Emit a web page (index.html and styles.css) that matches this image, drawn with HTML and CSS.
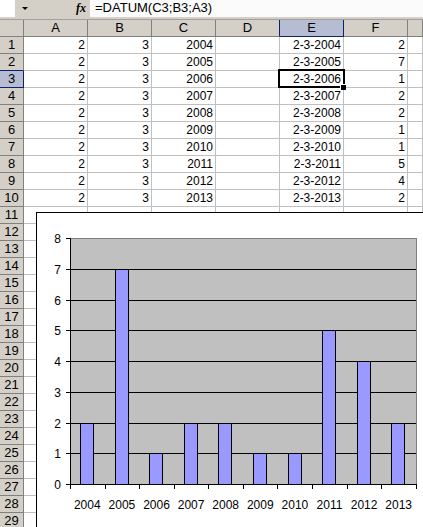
FILE: index.html
```html
<!DOCTYPE html>
<html>
<head>
<meta charset="utf-8">
<link rel="stylesheet" href="styles.css">
</head>
<body>
<div class="formula-bar">
  <div class="name-box"></div>
  <div class="name-drop"><span class="arrow"></span></div>
  <div class="fx-cell"><span class="fx">fx</span></div>
  <div class="formula">=DATUM(C3;B3;A3)</div>
</div>

<div class="sheet">
  <div class="corner"></div><div class="ch">A</div><div class="ch">B</div><div class="ch">C</div><div class="ch pre-sel">D</div><div class="ch sel">E</div><div class="ch">F</div><div class="ch"></div>

  <div class="rh">1</div><div class="c">2</div><div class="c">3</div><div class="c">2004</div><div class="c"></div><div class="c">2-3-2004</div><div class="c">2</div><div class="c"></div>
  <div class="rh pre-sel-row">2</div><div class="c">2</div><div class="c">3</div><div class="c">2005</div><div class="c"></div><div class="c">2-3-2005</div><div class="c">7</div><div class="c"></div>
  <div class="rh sel">3</div><div class="c">2</div><div class="c">3</div><div class="c">2006</div><div class="c"></div><div class="c active">2-3-2006</div><div class="c">1</div><div class="c"></div>
  <div class="rh">4</div><div class="c">2</div><div class="c">3</div><div class="c">2007</div><div class="c"></div><div class="c">2-3-2007</div><div class="c">2</div><div class="c"></div>
  <div class="rh">5</div><div class="c">2</div><div class="c">3</div><div class="c">2008</div><div class="c"></div><div class="c">2-3-2008</div><div class="c">2</div><div class="c"></div>
  <div class="rh">6</div><div class="c">2</div><div class="c">3</div><div class="c">2009</div><div class="c"></div><div class="c">2-3-2009</div><div class="c">1</div><div class="c"></div>
  <div class="rh">7</div><div class="c">2</div><div class="c">3</div><div class="c">2010</div><div class="c"></div><div class="c">2-3-2010</div><div class="c">1</div><div class="c"></div>
  <div class="rh">8</div><div class="c">2</div><div class="c">3</div><div class="c">2011</div><div class="c"></div><div class="c">2-3-2011</div><div class="c">5</div><div class="c"></div>
  <div class="rh">9</div><div class="c">2</div><div class="c">3</div><div class="c">2012</div><div class="c"></div><div class="c">2-3-2012</div><div class="c">4</div><div class="c"></div>
  <div class="rh">10</div><div class="c">2</div><div class="c">3</div><div class="c">2013</div><div class="c"></div><div class="c">2-3-2013</div><div class="c">2</div><div class="c"></div>

  <div class="rh">11</div><div class="c"></div><div class="c"></div><div class="c"></div><div class="c"></div><div class="c"></div><div class="c"></div><div class="c"></div>
  <div class="rh">12</div><div class="c"></div><div class="c"></div><div class="c"></div><div class="c"></div><div class="c"></div><div class="c"></div><div class="c"></div>
  <div class="rh">13</div><div class="c"></div><div class="c"></div><div class="c"></div><div class="c"></div><div class="c"></div><div class="c"></div><div class="c"></div>
  <div class="rh">14</div><div class="c"></div><div class="c"></div><div class="c"></div><div class="c"></div><div class="c"></div><div class="c"></div><div class="c"></div>
  <div class="rh">15</div><div class="c"></div><div class="c"></div><div class="c"></div><div class="c"></div><div class="c"></div><div class="c"></div><div class="c"></div>
  <div class="rh">16</div><div class="c"></div><div class="c"></div><div class="c"></div><div class="c"></div><div class="c"></div><div class="c"></div><div class="c"></div>
  <div class="rh">17</div><div class="c"></div><div class="c"></div><div class="c"></div><div class="c"></div><div class="c"></div><div class="c"></div><div class="c"></div>
  <div class="rh">18</div><div class="c"></div><div class="c"></div><div class="c"></div><div class="c"></div><div class="c"></div><div class="c"></div><div class="c"></div>
  <div class="rh">19</div><div class="c"></div><div class="c"></div><div class="c"></div><div class="c"></div><div class="c"></div><div class="c"></div><div class="c"></div>
  <div class="rh">20</div><div class="c"></div><div class="c"></div><div class="c"></div><div class="c"></div><div class="c"></div><div class="c"></div><div class="c"></div>
  <div class="rh">21</div><div class="c"></div><div class="c"></div><div class="c"></div><div class="c"></div><div class="c"></div><div class="c"></div><div class="c"></div>
  <div class="rh">22</div><div class="c"></div><div class="c"></div><div class="c"></div><div class="c"></div><div class="c"></div><div class="c"></div><div class="c"></div>
  <div class="rh">23</div><div class="c"></div><div class="c"></div><div class="c"></div><div class="c"></div><div class="c"></div><div class="c"></div><div class="c"></div>
  <div class="rh">24</div><div class="c"></div><div class="c"></div><div class="c"></div><div class="c"></div><div class="c"></div><div class="c"></div><div class="c"></div>
  <div class="rh">25</div><div class="c"></div><div class="c"></div><div class="c"></div><div class="c"></div><div class="c"></div><div class="c"></div><div class="c"></div>
  <div class="rh">26</div><div class="c"></div><div class="c"></div><div class="c"></div><div class="c"></div><div class="c"></div><div class="c"></div><div class="c"></div>
  <div class="rh">27</div><div class="c"></div><div class="c"></div><div class="c"></div><div class="c"></div><div class="c"></div><div class="c"></div><div class="c"></div>
  <div class="rh">28</div><div class="c"></div><div class="c"></div><div class="c"></div><div class="c"></div><div class="c"></div><div class="c"></div><div class="c"></div>
  <div class="rh">29</div><div class="c"></div><div class="c"></div><div class="c"></div><div class="c"></div><div class="c"></div><div class="c"></div><div class="c"></div>

  <!-- embedded column chart floating over the cells -->
  <div class="chart">
    <svg class="chart-svg" width="386" height="313" viewBox="0 0 386 313" shape-rendering="crispEdges">
      <!-- plot area -->
      <rect x="33" y="25" width="346" height="246" fill="#c0c0c0"/>
      <path d="M33 25.5H379.5V271" stroke="#808080" fill="none"/>
      <!-- gridlines -->
      <g stroke="#000">
        <path d="M33 56.5H379M33 87.5H379M33 117.5H379M33 148.5H379M33 179.5H379M33 210.5H379M33 240.5H379"/>
      </g>
      <!-- bars -->
      <g fill="#9999ff" stroke="#000">
        <rect x="43.5" y="210.5" width="13" height="61"/>
        <rect x="78.5" y="56.5" width="13" height="215"/>
        <rect x="112.5" y="240.5" width="13" height="31"/>
        <rect x="147.5" y="210.5" width="13" height="61"/>
        <rect x="181.5" y="210.5" width="13" height="61"/>
        <rect x="216.5" y="240.5" width="13" height="31"/>
        <rect x="251.5" y="240.5" width="13" height="31"/>
        <rect x="285.5" y="117.5" width="13" height="154"/>
        <rect x="320.5" y="148.5" width="13" height="123"/>
        <rect x="354.5" y="210.5" width="13" height="61"/>
      </g>
      <!-- axes and tick marks -->
      <g stroke="#000" fill="none">
        <path d="M33.5 25V272"/>
        <path d="M33 271.5H380"/>
        <path d="M29 25.5H33M29 56.5H33M29 87.5H33M29 117.5H33M29 148.5H33M29 179.5H33M29 210.5H33M29 240.5H33M29 271.5H33"/>
        <path d="M33.5 271V276M68.5 271V276M102.5 271V276M137.5 271V276M171.5 271V276M206.5 271V276M240.5 271V276M275.5 271V276M310.5 271V276M344.5 271V276M379.5 271V276"/>
      </g>
      <!-- value axis labels -->
      <g class="lbl" text-anchor="end">
        <text x="24" y="30">8</text>
        <text x="24" y="61">7</text>
        <text x="24" y="92">6</text>
        <text x="24" y="122">5</text>
        <text x="24" y="153">4</text>
        <text x="24" y="184">3</text>
        <text x="24" y="215">2</text>
        <text x="24" y="245">1</text>
        <text x="24" y="276">0</text>
      </g>
      <!-- category labels -->
      <g class="lbl" text-anchor="middle">
        <text x="50.3" y="296">2004</text>
        <text x="84.9" y="296">2005</text>
        <text x="119.5" y="296">2006</text>
        <text x="154.1" y="296">2007</text>
        <text x="188.7" y="296">2008</text>
        <text x="223.3" y="296">2009</text>
        <text x="257.9" y="296">2010</text>
        <text x="292.5" y="296">2011</text>
        <text x="327.1" y="296">2012</text>
        <text x="361.7" y="296">2013</text>
      </g>
    </svg>
  </div>
</div>
</body>
</html>
```

FILE: styles.css
```css
html, body {
  margin: 0;
  padding: 0;
  background: #ffffff;
  overflow: hidden;
}

body {
  width: 423px;
  height: 527px;
  font-family: "Liberation Sans", Arial, sans-serif;
  font-size: 12px;
  color: #000;
}

/* formula bar */
.formula-bar {
  display: flex;
  height: 20px;
  box-sizing: border-box;
  background: #d4d0c8;
  border-bottom: 1px solid #a0a0a0;
}

.name-box {
  width: 15px;
  height: 17px;
  background: #ffffff;
}

.name-drop {
  width: 16px;
  height: 17px;
  display: flex;
  align-items: center;
  justify-content: center;
}

.arrow {
  width: 0;
  height: 0;
  border-left: 3px solid transparent;
  border-right: 3px solid transparent;
  border-top: 3px solid #000;
  margin-left: 3px;
}

.fx-cell {
  width: 59px;
  height: 17px;
  position: relative;
}

.fx {
  position: absolute;
  left: 45px;
  top: 1px;
  font-family: "Liberation Serif", "Times New Roman", serif;
  font-style: italic;
  font-weight: bold;
  font-size: 12px;
  line-height: 14px;
}

.formula {
  flex: 1;
  height: 17px;
  background: #fbfbfb;
  padding-left: 5px;
  font-size: 13px;
  line-height: 16px;
}

/* worksheet grid */
.sheet {
  position: relative;
  display: grid;
  grid-template-columns: 24px repeat(6, 64px) 1fr;
  grid-auto-rows: 17px;
  height: 507px;
  overflow: hidden;
}

.sheet > div {
  box-sizing: border-box;
  white-space: nowrap;
  overflow: hidden;
}

.corner,
.ch,
.rh {
  background: #d4d0c8;
  border-right: 1px solid #808080;
  border-bottom: 1px solid #808080;
  text-align: center;
  line-height: 16px;
  font-size: 13px;
}

.ch.sel,
.rh.sel {
  background: #b6bdd2;
  border-right-color: #0a246a;
  border-bottom-color: #0a246a;
}

.ch.pre-sel {
  border-right-color: #0a246a;
}

.rh.pre-sel-row {
  border-bottom-color: #0a246a;
}

.c {
  border-right: 1px solid #c0c0c0;
  border-bottom: 1px solid #c0c0c0;
  text-align: right;
  padding: 0 2px 0 0;
  line-height: 16px;
  font-size: 12px;
}

.sheet > .active {
  position: relative;
  overflow: visible;
}

.active::before {
  content: "";
  position: absolute;
  left: -2px;
  top: -2px;
  right: -2px;
  bottom: -1px;
  border: 2px solid #000;
}

.active::after {
  content: "";
  position: absolute;
  right: -3px;
  bottom: -3px;
  width: 5px;
  height: 5px;
  background: #000;
  box-shadow: -1px -1px 0 #fff;
}

/* embedded chart, clipped by the window edge */
.sheet > .chart {
  position: absolute;
  left: 36px;
  top: 192px;
  right: 0;
  bottom: 0;
  background: #ffffff;
  border-left: 1px solid #000;
  border-top: 1px solid #000;
  overflow: hidden;
}

.chart-svg {
  display: block;
}

.lbl {
  font-family: "Liberation Sans", Arial, sans-serif;
  font-size: 12px;
  fill: #000;
}
```
